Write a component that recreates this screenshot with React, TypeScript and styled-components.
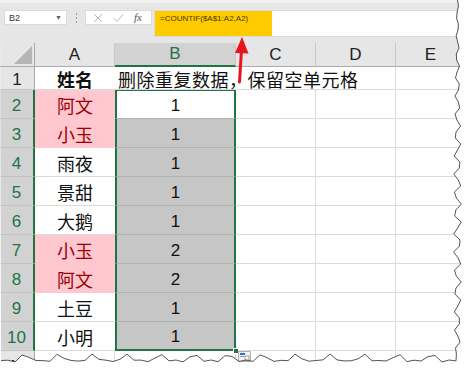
import React from 'react'
import styled, { createGlobalStyle, css } from 'styled-components'

const GREEN = '#217346'
const CJK = `"Noto Sans CJK SC", "Noto Sans", sans-serif`
const LATIN = `"Liberation Sans", "Noto Sans CJK SC", sans-serif`

// torn paper edge, right side then bottom
const rightEdge: [number, number][] = []
for (let y = 0; y <= 354; y += 6) {
  const i = y / 6
  rightEdge.push([457.5 + 2.5 * Math.sin(i * 1.9) + 1.5 * Math.sin(i * 4.3), y])
}
const bottomEdge: [number, number][] = []
for (let x = 456; x >= 0; x -= 7) {
  const i = x / 7
  bottomEdge.push([x, 359 + 3 * Math.sin(i * 1.3) + 2 * Math.sin(i * 3.7)])
}
const edge = [...rightEdge, ...bottomEdge]
const clipPoints = ['0px 0px', ...edge.map(([x, y]) => `${x.toFixed(1)}px ${y.toFixed(1)}px`)].join(', ')
const linePoints = edge.map(([x, y]) => `${x.toFixed(1)},${y.toFixed(1)}`).join(' ')

const GlobalStyle = createGlobalStyle`
  html, body {
    margin: 0;
    padding: 0;
    background: #fff;
  }
  body {
    font-family: ${LATIN};
  }
`

const Frame = styled.div`
  position: relative;
  width: 467px;
  height: 373px;
  overflow: hidden;
  background: #fff;
`

const Paper = styled.div`
  width: 467px;
  height: 373px;
  clip-path: polygon(${clipPoints});
`

const Toolbar = styled.div`
  display: flex;
  align-items: flex-start;
  height: 43px;
  box-sizing: border-box;
  padding: 10px 0 0 4px;
  background: #e6e6e6;
  border-top: 3px solid #f1f1f1;
  padding-top: 7px;
`

const NameBox = styled.div`
  width: 63px;
  height: 15px;
  box-sizing: border-box;
  background: #fff;
  border: 1px solid #dcdcdc;
  display: flex;
  align-items: center;
  justify-content: space-between;
  padding: 0 4px;
  font-size: 9px;
  color: #333;
`

const Caret = styled.span`
  font-size: 7px;
  color: #666;
`

const Dots = styled.div`
  width: 3px;
  height: 11px;
  margin: 2px 7px 0 8px;
  background-image: radial-gradient(circle, #9a9a9a 0.8px, transparent 1.1px);
  background-size: 3px 4px;
`

const FuncButtons = styled.div`
  width: 67px;
  height: 15px;
  box-sizing: border-box;
  background: #fff;
  border: 1px solid #dcdcdc;
  display: flex;
  align-items: center;
  justify-content: space-around;
  padding: 0 4px 0 2px;
  margin-right: 2px;
`

const Fx = styled.span`
  font-family: "Liberation Serif", serif;
  font-style: italic;
  font-size: 11px;
  color: #555;
  line-height: 1;
`

const FormulaBar = styled.div`
  flex: 1;
  height: 27px;
  background: #fff;
  border: 1px solid #dcdcdc;
  border-right: none;
  box-sizing: border-box;
  display: flex;
`

const Formula = styled.div`
  width: 117px;
  background: #fecb00;
  font-size: 8px;
  color: #4a3a00;
  padding: 3px 0 0 5px;
  box-sizing: border-box;
  white-space: nowrap;
`

const Sheet = styled.div`
  display: grid;
  grid-template-columns: 35px 80px 121px 80px 80px 70px;
  grid-template-rows: 24px 23px repeat(10, 29px);
  font-family: ${LATIN};
`

const Corner = styled.div`
  background: #e6e6e6;
  border-right: 1px solid #ababab;
  border-bottom: 1px solid #ababab;
  position: relative;
  &::after {
    content: '';
    position: absolute;
    right: 2px;
    bottom: 2px;
    width: 18px;
    height: 18px;
    background: #b5b5b5;
    clip-path: polygon(100% 0, 100% 100%, 0 100%);
  }
`

const ColHeader = styled.div<{ $selected?: boolean }>`
  background: ${(p) => (p.$selected ? '#d2d2d2' : '#e6e6e6')};
  color: ${(p) => (p.$selected ? GREEN : '#222')};
  border-right: 1px solid #c8c8c8;
  border-bottom: ${(p) => (p.$selected ? `2px solid ${GREEN}` : '1px solid #ababab')};
  font-size: 17px;
  display: flex;
  align-items: flex-end;
  justify-content: center;
  padding-bottom: 1px;
  box-sizing: border-box;
`

const RowHeader = styled.div<{ $selected?: boolean }>`
  background: ${(p) => (p.$selected ? '#d2d2d2' : '#e6e6e6')};
  color: ${(p) => (p.$selected ? GREEN : '#222')};
  border-right: ${(p) => (p.$selected ? `2px solid ${GREEN}` : '1px solid #ababab')};
  border-bottom: 1px solid #c4c4c4;
  font-size: 17px;
  display: flex;
  align-items: center;
  justify-content: center;
  padding-top: 3px;
  box-sizing: border-box;
`

const NameCell = styled.div<{ $dup?: boolean; $bold?: boolean }>`
  background: ${(p) => (p.$dup ? '#ffc7ce' : '#fff')};
  color: ${(p) => (p.$dup ? '#9c0006' : '#111')};
  font-family: ${CJK};
  font-size: 18px;
  font-weight: ${(p) => (p.$bold ? 700 : 400)};
  border-bottom: 1px solid ${(p) => (p.$dup ? '#ffc7ce' : '#dadada')};
  display: flex;
  align-items: center;
  justify-content: center;
  padding-top: 2px;
  box-sizing: border-box;
`

const ValueCell = styled.div<{ $active?: boolean; $top?: boolean; $bottom?: boolean }>`
  background: ${(p) => (p.$active ? '#fff' : '#c6c6c6')};
  color: #111;
  font-size: 17px;
  display: flex;
  align-items: center;
  justify-content: center;
  padding-top: 3px;
  box-sizing: border-box;
  border-left: 2px solid ${GREEN};
  border-right: 2px solid ${GREEN};
  border-bottom: 1px solid #b2b2b2;
  ${(p) =>
    p.$top &&
    css`
      border-top: 1px solid ${GREEN};
    `}
  ${(p) =>
    p.$bottom &&
    css`
      border-bottom: 2px solid ${GREEN};
    `}
`

const TitleCell = styled.div`
  grid-column: span 3;
  font-family: ${CJK};
  font-size: 18px;
  letter-spacing: 0.5px;
  color: #111;
  white-space: nowrap;
  display: flex;
  align-items: center;
  padding: 2px 0 0 3px;
  box-sizing: border-box;
  border-right: 1px solid #dadada;
  border-bottom: 1px solid #dadada;
`

const EmptyCell = styled.div`
  background: #fff;
  border-right: 1px solid #dadada;
  border-bottom: 1px solid #dadada;
`

const Overlay = styled.svg`
  position: absolute;
  left: 0;
  top: 0;
  pointer-events: none;
`

const FillHandle = styled.div`
  position: absolute;
  left: 233px;
  top: 348px;
  width: 4px;
  height: 4px;
  background: ${GREEN};
  border: 1px solid #fff;
`

const PasteIcon = styled.svg`
  position: absolute;
  left: 238px;
  top: 351px;
`

const rows: { name: string; value: string; dup?: boolean }[] = [
  { name: '阿文', value: '1', dup: true },
  { name: '小玉', value: '1', dup: true },
  { name: '雨夜', value: '1' },
  { name: '景甜', value: '1' },
  { name: '大鹅', value: '1' },
  { name: '小玉', value: '2', dup: true },
  { name: '阿文', value: '2', dup: true },
  { name: '土豆', value: '1' },
  { name: '小明', value: '1' },
]

const App: React.FC = () => {
  return (
    <Frame>
      <GlobalStyle />
      <Paper>
        <Toolbar>
          <NameBox>
            B2<Caret>▼</Caret>
          </NameBox>
          <Dots />
          <FuncButtons>
            <svg width="10" height="10" viewBox="0 0 10 10">
              <path d="M1 1 L9 9 M9 1 L1 9" stroke="#b8b8b8" strokeWidth="1" />
            </svg>
            <svg width="11" height="10" viewBox="0 0 11 10">
              <path d="M1 5.5 L4 8.5 L10 1.5" stroke="#b8b8b8" strokeWidth="1" fill="none" />
            </svg>
            <Fx>fx</Fx>
          </FuncButtons>
          <FormulaBar>
            <Formula>=COUNTIF($A$1:A2,A2)</Formula>
          </FormulaBar>
        </Toolbar>
        <Sheet>
          <Corner />
          <ColHeader>A</ColHeader>
          <ColHeader $selected>B</ColHeader>
          <ColHeader>C</ColHeader>
          <ColHeader>D</ColHeader>
          <ColHeader>E</ColHeader>

          <RowHeader>1</RowHeader>
          <NameCell $bold>姓名</NameCell>
          <TitleCell>删除重复数据，保留空单元格</TitleCell>
          <EmptyCell />

          {rows.map((r, i) => (
            <React.Fragment key={i}>
              <RowHeader $selected>{i + 2}</RowHeader>
              <NameCell $dup={r.dup}>{r.name}</NameCell>
              <ValueCell $active={i === 0} $top={i === 0} $bottom={i === rows.length - 1}>
                {r.value}
              </ValueCell>
              <EmptyCell />
              <EmptyCell />
              <EmptyCell />
            </React.Fragment>
          ))}

          <RowHeader>11</RowHeader>
          <EmptyCell />
          <EmptyCell />
          <EmptyCell />
          <EmptyCell />
          <EmptyCell />
        </Sheet>
      </Paper>

      <FillHandle />
      <PasteIcon width="13" height="11" viewBox="0 0 13 11">
        <rect x="0.5" y="0.5" width="12" height="10" fill="#f4f4f4" stroke="#b0b0b0" />
        <rect x="2" y="2" width="5" height="2" fill="#2f6fd6" />
        <rect x="2" y="5" width="4" height="1" fill="#9a9a9a" />
        <rect x="7" y="5" width="4" height="4" fill="#fff" stroke="#888" strokeWidth="0.8" />
      </PasteIcon>

      <Overlay width="467" height="373" viewBox="0 0 467 373">
        <polyline points={linePoints} fill="none" stroke="#555" strokeWidth="1" />
        <path d="M239.5 82 L241.5 50" stroke="#e8141b" strokeWidth="3" strokeLinecap="round" />
        <polygon points="242,37 235,53 248.5,53.5" fill="#e8141b" />
      </Overlay>
    </Frame>
  )
}

export default App
